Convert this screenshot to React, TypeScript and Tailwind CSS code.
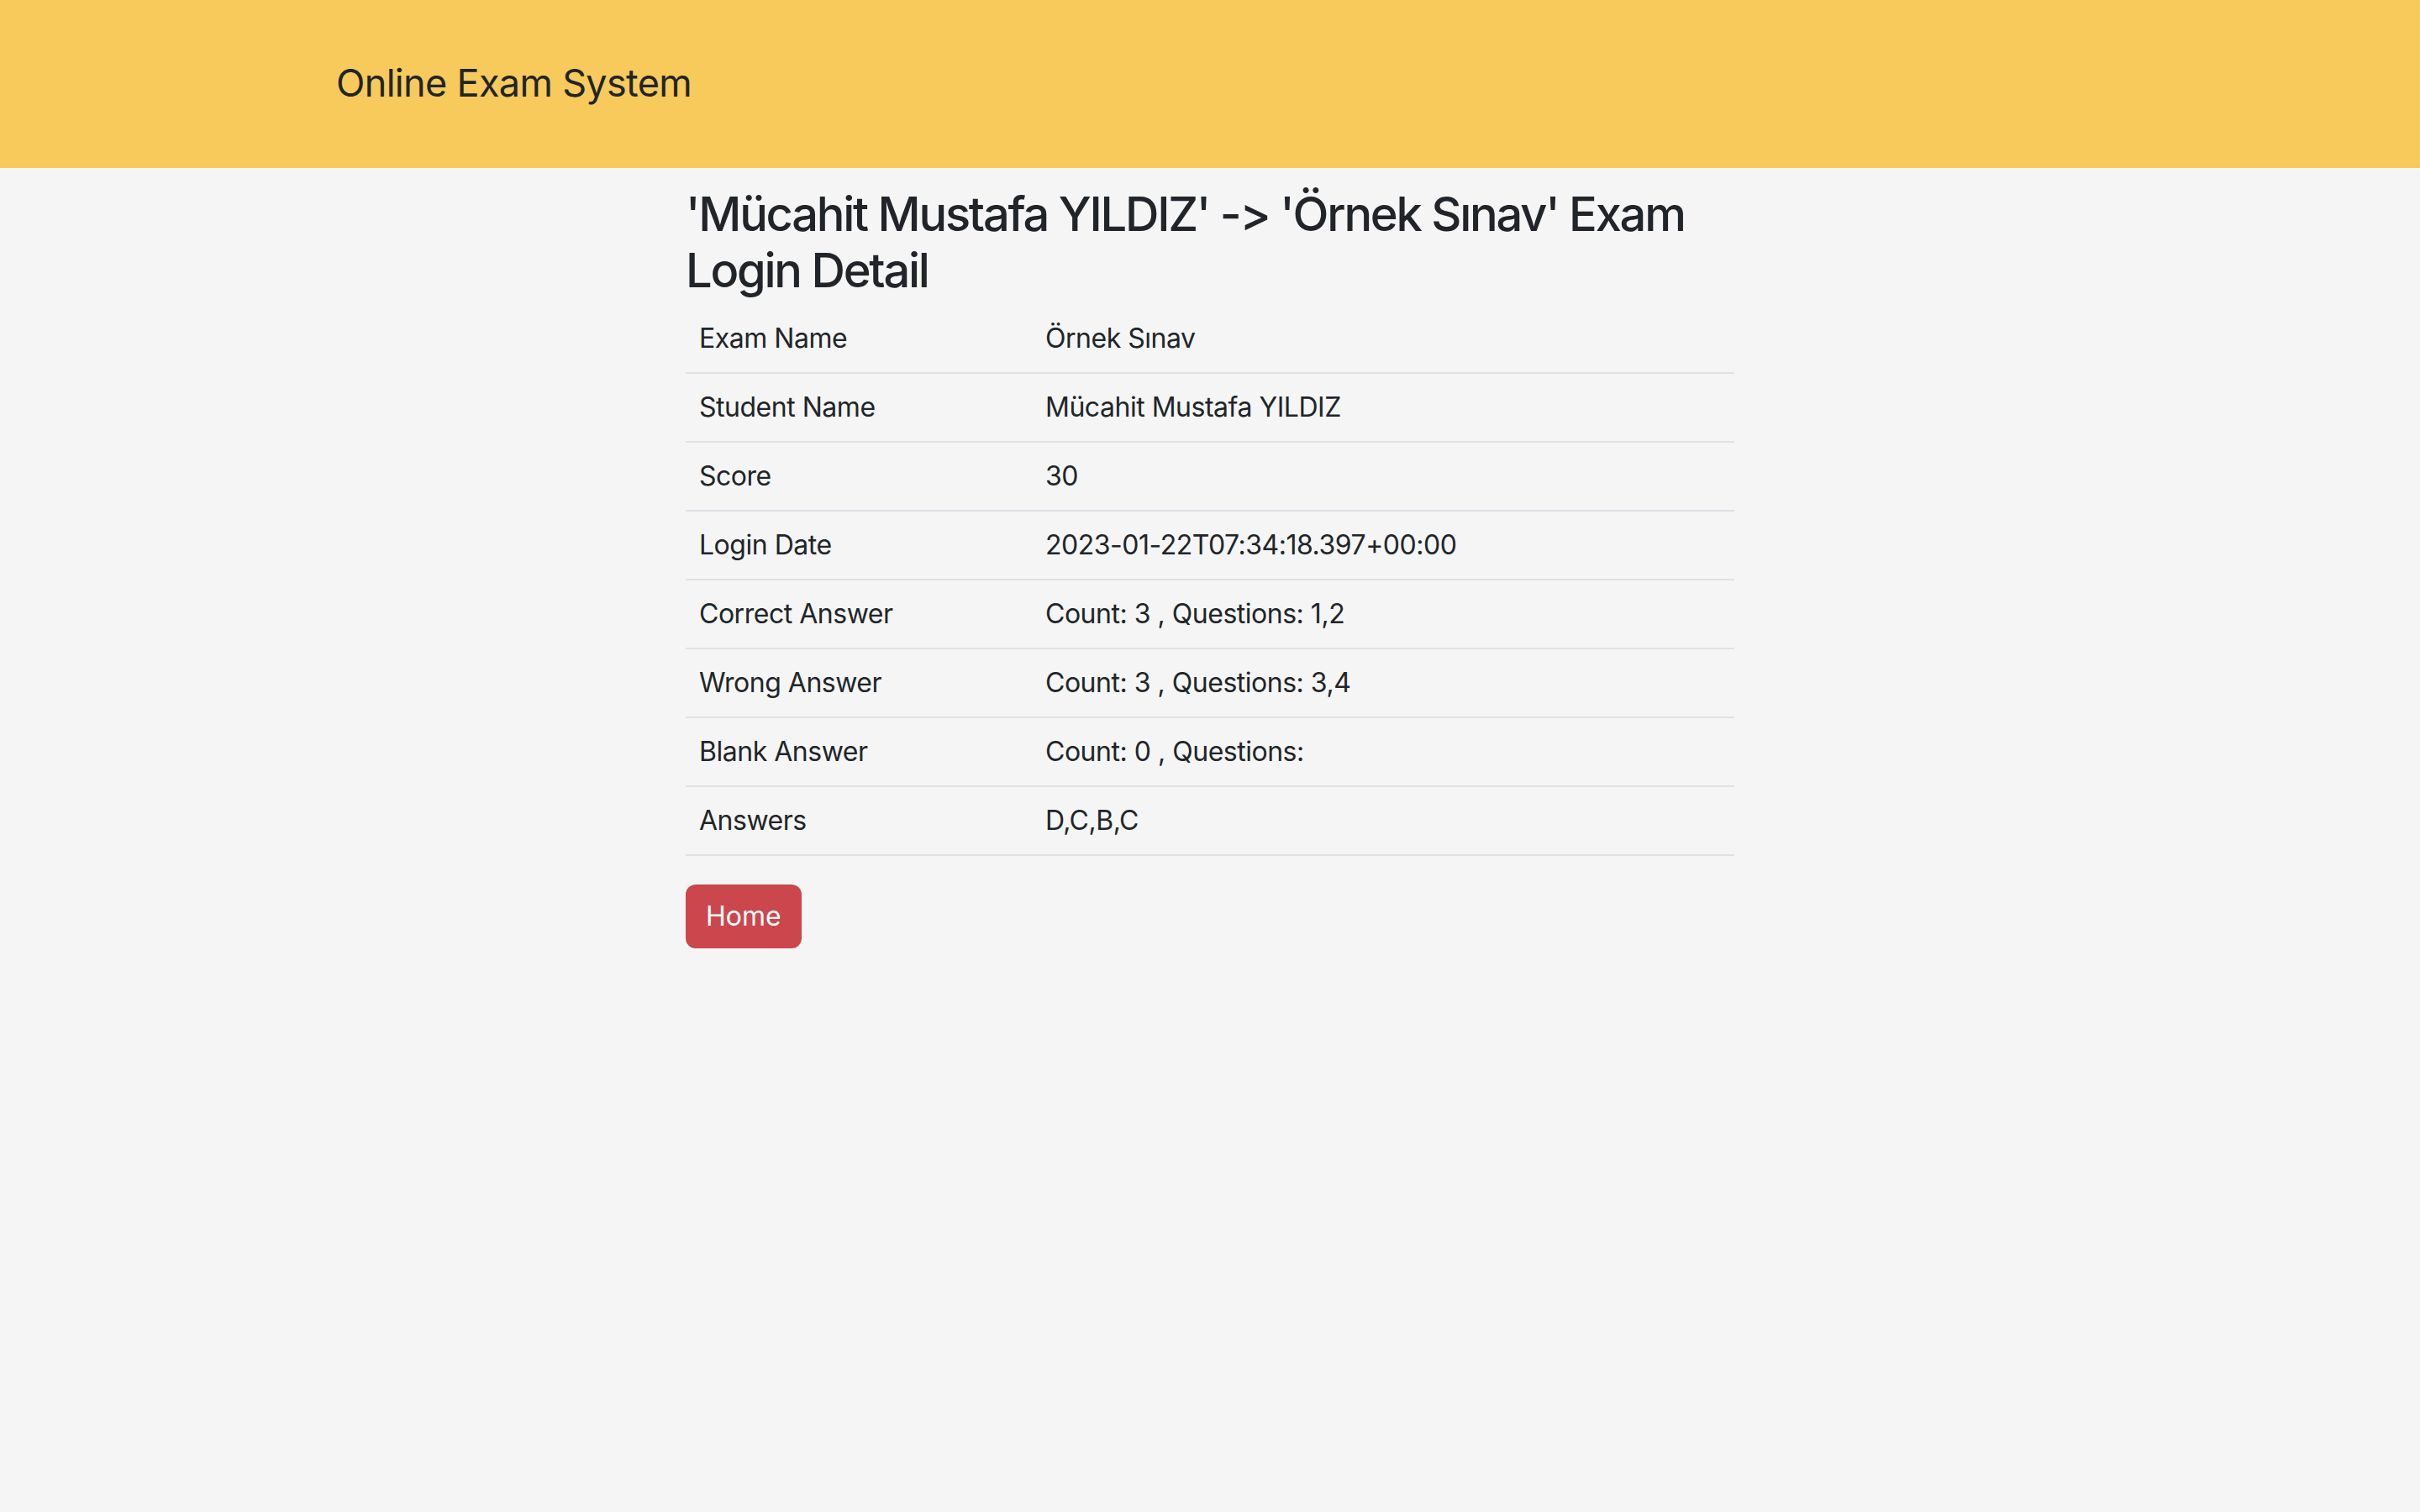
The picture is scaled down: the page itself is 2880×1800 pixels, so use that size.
const rows: [string, string][] = [
  ['Exam Name', 'Örnek Sınav'],
  ['Student Name', 'Mücahit Mustafa YILDIZ'],
  ['Score', '30'],
  ['Login Date', '2023-01-22T07:34:18.397+00:00'],
  ['Correct Answer', 'Count: 3 , Questions: 1,2'],
  ['Wrong Answer', 'Count: 3 , Questions: 3,4'],
  ['Blank Answer', 'Count: 0 , Questions: '],
  ['Answers', 'D,C,B,C'],
]

export default function App() {
  return (
    <div className="min-h-screen bg-[#f5f5f5] text-[#212529] font-['Inter',sans-serif]">
      <nav className="flex h-[200px] items-center bg-[#f7ca5b] pb-[3px] pl-[400px]">
        <span className="text-[45px] tracking-[-0.015em]">Online Exam System</span>
      </nav>

      <main className="mx-auto w-[1248px] pt-[22px]">
        <h3 className="mb-[6px] text-[56px] font-medium leading-[1.2] tracking-[-0.04em]">
          'Mücahit Mustafa YILDIZ' -&gt; 'Örnek Sınav' Exam Login Detail
        </h3>

        <table className="w-full border-collapse text-[32px] tracking-[-0.015em]">
          <tbody>
            {rows.map(([label, value]) => (
              <tr key={label} className="h-[82px] border-b-2 border-[#dee2e6]">
                <td className="w-[412px] px-[16px]">{label}</td>
                <td className="px-[16px]">{value}</td>
              </tr>
            ))}
          </tbody>
        </table>

        <button className="mt-[34px] h-[76px] rounded-[12px] bg-[#cc464d] px-[24px] text-[32px] text-white">
          Home
        </button>
      </main>
    </div>
  )
}
